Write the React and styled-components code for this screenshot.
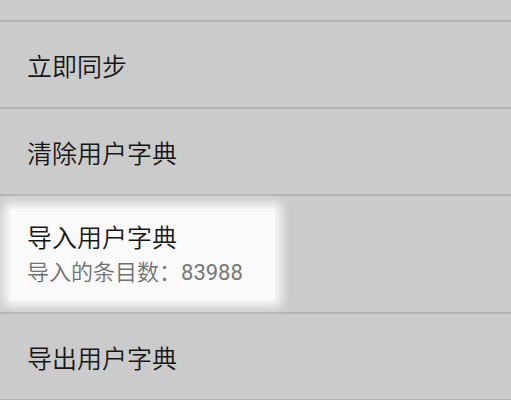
import React from 'react';
import styled, { createGlobalStyle } from 'styled-components';

const GlobalStyle = createGlobalStyle`
  html, body {
    margin: 0;
    padding: 0;
    background: #cbcbcb;
  }
  body {
    font-family: Roboto, "Noto Sans CJK SC", "Noto Sans", sans-serif;
    overflow: hidden;
  }
`;

const List = styled.ul`
  list-style: none;
  margin: 0;
  padding: 0;
  width: 511px;
  height: 400px;
  overflow: hidden;
  background: #cbcbcb;
`;

const Row = styled.li`
  display: flex;
  align-items: center;
  box-sizing: border-box;
  height: ${({ h }) => h}px;
  padding-left: ${({ focused }) => (focused ? '10px' : '27px')};
  border-bottom: 2px solid #b2b2b2;
`;

const Focus = styled.div`
  display: flex;
  flex-direction: column;
  padding: 12px 32px 14px 17px;
  background: #fafafa;
  box-shadow: 0 0 10px 6px #fafafa;
`;

const Title = styled.div`
  font-family: "Noto Sans CJK SC", sans-serif;
  font-size: 25px;
  font-weight: 350;
  line-height: 30px;
  color: #161616;
`;

const Summary = styled.div`
  margin-top: 6px;
  font-family: "Noto Sans CJK SC", sans-serif;
  font-size: 22px;
  font-weight: 350;
  line-height: 26px;
  color: #707070;
`;

const Count = styled.span`
  font-family: Roboto, sans-serif;
  font-weight: 400;
  color: #767676;
`;

const items = [
  { title: '立即同步' },
  { title: '清除用户字典' },
  { title: '导入用户字典', label: '导入的条目数：', count: 83988, focused: true },
  { title: '导出用户字典' }
];

export default function App () {
  return (
    <>
      <GlobalStyle />
      <List>
        <Row h={22} />
        {items.map((item) => (
          <Row key={item.title} h={item.label ? 118 : 87} focused={item.focused}>
            {item.focused ? (
              <Focus>
                <Title>{item.title}</Title>
                <Summary>
                  {item.label}
                  <Count>{item.count}</Count>
                </Summary>
              </Focus>
            ) : (
              <Title>{item.title}</Title>
            )}
          </Row>
        ))}
      </List>
    </>
  );
}
